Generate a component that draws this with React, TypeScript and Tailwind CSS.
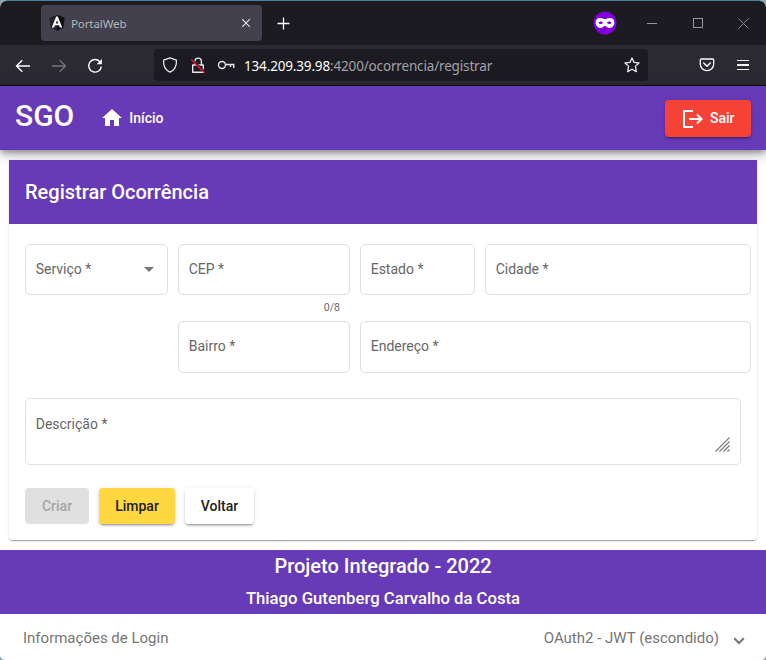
import type { ReactNode } from 'react';

function Icon({ box, w, h, className = '', children }: { box: string; w: number; h: number; className?: string; children: ReactNode }) {
  return (
    <svg viewBox={box} width={w} height={h} className={`block shrink-0 ${className}`} fill="none">
      {children}
    </svg>
  );
}

function TitleBar() {
  return (
    <div className="flex h-[45px] shrink-0 items-center rounded-t-[7px] border-t border-[#4d7f9e] bg-[#1c1b22] font-['Noto_Sans',sans-serif]">
      <div className="ml-[41px] flex h-9 w-[221px] items-center rounded-[4px] bg-[#42414d] pl-2 pr-[11px]">
        <Icon box="0 0 16 16" w={16} h={16}>
          <path d="M8 0 15.6 2.7 14.4 12.6 8 16 1.6 12.6.4 2.7Z" fill="#22232d" />
          <path d="M8 0 15.6 2.7 14.4 12.6 8 16Z" fill="#101118" />
          <path d="M7.2 1.6 2.8 12.5H5.1L6 10.2H10L10.9 12.5H13.2L8.8 1.6ZM8 5.2 9.3 8.5H6.7Z" fill="#fff" fillRule="evenodd" />
        </Icon>
        <span className="ml-[6px] mt-px flex-1 text-[11.5px] leading-4 tracking-[-0.1px] text-[#b5b4ba]">PortalWeb</span>
        <Icon box="0 0 10 10" w={10} h={10}>
          <path d="M1.2 1.2 8.8 8.8M8.8 1.2 1.2 8.8" stroke="#e5e5e8" strokeWidth="1.1" />
        </Icon>
      </div>
      <Icon box="0 0 13 13" w={13} h={13} className="ml-[15px]">
        <path d="M.5 6.5H12.5M6.5.5V12.5" stroke="#fbfbfe" strokeWidth="1.3" />
      </Icon>
      <Icon box="0 0 24 24" w={24} h={24} className="ml-[303px]">
        <circle cx="12" cy="12" r="11.5" fill="#8000d7" />
        <path
          fillRule="evenodd"
          fill="#fff"
          d="M7.2 6.9C9.4 6.9 10.6 8 12 8S14.6 6.9 16.8 6.9C19.8 6.9 21.4 8.8 21.4 11.6 21.4 14.8 19.2 16.9 16.6 16.9 14 16.9 13.4 14.9 12 14.9S10 16.9 7.4 16.9C4.8 16.9 2.6 14.8 2.6 11.6 2.6 8.8 4.2 6.9 7.2 6.9ZM5.5 11.9C6 10.9 6.9 10.6 7.8 10.6S9.6 11 10 11.9C9.4 12.6 8.7 12.9 7.8 12.9S6 12.6 5.5 11.9ZM14 11.9C14.4 11 15.3 10.6 16.2 10.6S18 10.9 18.5 11.9C18 12.6 17.1 12.9 16.2 12.9S14.6 12.6 14 11.9Z"
        />
      </Icon>
      <div className="ml-[30px] h-px w-[10px] bg-[#97969a]" />
      <div className="ml-[36px] size-[10px] border border-[#97969a]" />
      <Icon box="0 0 11 11" w={11} h={11} className="ml-[35px]">
        <path d="M.5.5 10.5 10.5M10.5.5.5 10.5" stroke="#97969a" strokeWidth=".9" />
      </Icon>
    </div>
  );
}

function Toolbar() {
  return (
    <div className="flex h-[41px] shrink-0 items-center border-b border-[#0c0c0d] bg-[#2b2a33] font-['Noto_Sans',sans-serif]">
      <Icon box="0 0 16 14" w={16} h={14} className="ml-[15px] mt-px">
        <path d="M15 7H1.5M7.3 1.3 1.5 7 7.3 12.7" stroke="#fbfbfe" strokeWidth="1.4" />
      </Icon>
      <Icon box="0 0 16 14" w={16} h={14} className="ml-5 mt-px">
        <path d="M1 7H14.5M8.7 1.3 14.5 7 8.7 12.7" stroke="#75747b" strokeWidth="1.3" />
      </Icon>
      <Icon box="0 0 16 16" w={16} h={16} className="ml-5 mt-px">
        <path d="M12.8 3.7A6.3 6.3 0 1 0 14.3 8.6" stroke="#fbfbfe" strokeWidth="1.4" />
        <path d="M14.9 1V6.3H9.6Z" fill="#fbfbfe" />
      </Icon>
      <div className="ml-[51px] flex h-8 w-[494px] items-center rounded-[4px] bg-[#1c1b22] pl-2">
        <Icon box="0 0 16 16" w={16} h={16}>
          <path d="M8 .8 14.4 3.1C14.8 7.4 13.4 12.6 8 15.2 2.6 12.6 1.2 7.4 1.6 3.1Z" stroke="#e6e6ea" strokeWidth="1.3" strokeLinejoin="round" />
        </Icon>
        <Icon box="0 0 16 17" w={16} h={17} className="ml-3">
          <path d="M2.7 8H13.3V15.3H2.7ZM5 8V4.5C5 0 11.4 0 11.4 4.5V8" stroke="#e6e6ea" strokeWidth="1.4" strokeLinejoin="round" />
          <path d="M2.2 2.2 15.2 15" stroke="#1c1b22" strokeWidth="1.4" />
          <path d="M1.2 2.6 14.9 16" stroke="#e4123c" strokeWidth="1.5" />
        </Icon>
        <Icon box="0 0 18 10" w={18} h={10} className="-mt-px ml-[11px]">
          <circle cx="5" cy="5" r="3.5" stroke="#e6e6ea" strokeWidth="1.4" />
          <path d="M8.5 4.5H16.7V8M13.5 4.5V7" stroke="#e6e6ea" strokeWidth="1.4" />
        </Icon>
        <span className="ml-[9px] mt-[2px] flex-1 whitespace-nowrap text-[13.5px] leading-5 tracking-[-0.16px] text-[#a3a2a8]">
          <span className="text-[#fbfbfe]">134.209.39.98</span>:4200/ocorrencia/registrar
        </span>
        <Icon box="0 0 16 16" w={16} h={16} className="mr-2">
          <path d="M8 1 10.1 5.4 15 6 11.4 9.4 12.4 14.7 8 12.2 3.6 14.7 4.6 9.4 1 6 5.9 5.4Z" stroke="#e6e6ea" strokeWidth="1.3" strokeLinejoin="round" />
        </Icon>
      </div>
      <Icon box="0 0 16 14" w={16} h={14} className="ml-[51px]">
        <path d="M2.2 1H13.8Q14.7 1 14.7 1.9V6A6.7 6.7 0 0 1 1.3 6V1.9Q1.3 1 2.2 1Z" stroke="#fbfbfe" strokeWidth="1.3" />
        <path d="M4.7 5 8 8.2 11.3 5" stroke="#fbfbfe" strokeWidth="1.4" strokeLinecap="round" />
      </Icon>
      <div className="ml-[22px] flex w-3 flex-col gap-[3.5px]">
        <div className="h-[1.3px] bg-[#fbfbfe]" />
        <div className="h-[1.3px] bg-[#fbfbfe]" />
        <div className="h-[1.3px] bg-[#fbfbfe]" />
      </div>
    </div>
  );
}

function Field({ label, className, children }: { label: string; className: string; children?: ReactNode }) {
  return (
    <div className={`flex items-center justify-between rounded-[5px] border border-[#e0e0e0] pb-[2px] pl-[9.7px] pr-[9px] text-sm leading-4 text-[#666] ${className}`}>
      <span>{label} *</span>
      {children}
    </div>
  );
}

const raised = 'shadow-[0_3px_1px_-2px_rgba(0,0,0,.2),0_2px_2px_0_rgba(0,0,0,.14),0_1px_5px_0_rgba(0,0,0,.12)]';

export default function App() {
  return (
    <div className="h-[660px] w-[766px] bg-[#8fa3ad]">
      <div className="flex h-full flex-col overflow-hidden rounded-b-[5px] rounded-t-[7px] bg-white font-[Roboto,sans-serif]">
        <TitleBar />
        <Toolbar />
        <header className="flex h-16 shrink-0 items-center bg-[#673ab7] px-[15px] text-white shadow-[0_3px_5px_-1px_rgba(0,0,0,.3),0_6px_10px_0_rgba(0,0,0,.18),0_1px_18px_0_rgba(0,0,0,.12)]">
          <span className="-mt-[5px] text-[30px] font-medium leading-8">SGO</span>
          <Icon box="0 0 24 24" w={24} h={24} className="-mt-px ml-[26px]">
            <path d="M10 20v-6h4v6h5v-8h3L12 3 2 12h3v8z" fill="#fff" />
          </Icon>
          <span className="ml-[5px] flex-1 text-sm font-medium">Início</span>
          <button className={`flex h-[37px] w-[86px] items-center rounded-[4px] bg-[#f44336] pl-4 text-sm font-medium ${raised}`}>
            <Icon box="0 0 24 20" w={24} h={20} className="mt-px">
              <path d="M12 2H3V18H12M8 10H20M16 5.5 20.5 10 16 14.5" stroke="#fff" strokeWidth="2" />
            </Icon>
            <span className="ml-[5px]">Sair</span>
          </button>
        </header>
        <main className="mx-[9px] mt-[10px] flex h-[380px] w-[748px] shrink-0 flex-col rounded-b-[4px] shadow-[0_2px_1px_-1px_rgba(0,0,0,.2),0_1px_1px_0_rgba(0,0,0,.14),0_1px_3px_0_rgba(0,0,0,.12)]">
          <h1 className="flex h-16 shrink-0 items-center bg-[#673ab7] pl-4 text-[20px] font-medium text-white">Registrar Ocorrência</h1>
          <form className="flex flex-1 flex-col rounded-b-[4px] bg-white pl-4 pt-5">
            <div className="flex gap-[10px]">
              <Field label="Serviço" className="h-[51px] w-[143px]">
                <div className="mr-1 mt-px h-0 w-0 border-x-5 border-t-5 border-x-transparent border-t-[#757575]" />
              </Field>
              <div className="w-[172px]">
                <Field label="CEP" className="h-[51px] w-full" />
                <div className="h-[26px] pr-[10px] pt-[5px] text-right text-[10.5px] leading-[15px] text-[#666]">0/8</div>
              </div>
              <Field label="Estado" className="h-[51px] w-[115px]" />
              <Field label="Cidade" className="h-[51px] w-[266px]" />
            </div>
            <div className="ml-[153px] flex gap-[10px]">
              <Field label="Bairro" className="h-[52px] w-[172px]" />
              <Field label="Endereço" className="h-[52px] w-[391px]" />
            </div>
            <div className="mt-[25px] flex h-[67px] w-[716px] justify-between rounded-[5px] border border-[#e0e0e0] pl-[9.7px] pr-[10px] text-sm leading-4 text-[#666]">
              <span className="mt-[17px]">Descrição *</span>
              <Icon box="0 0 15 15" w={15} h={15} className="mt-[38px]">
                <path d="M.5 14.5 14.5.5M4.5 14.5 14.5 4.5M8.5 14.5 14.5 8.5M12.5 14.5 14.5 12.5" stroke="#777" strokeWidth="1.1" />
              </Icon>
            </div>
            <div className="mt-[23px] flex gap-[10px] text-sm font-medium text-[#212121]">
              <button className="h-9 w-16 rounded-[4px] bg-[#e0e0e0] text-[#a6a6a6]">Criar</button>
              <button className={`h-9 w-[76px] rounded-[4px] bg-[#ffd740] ${raised}`}>Limpar</button>
              <button className={`h-9 w-[69px] rounded-[4px] bg-white ${raised}`}>Voltar</button>
            </div>
          </form>
        </main>
        <footer className="mt-[10px] flex h-16 shrink-0 flex-col items-center bg-[#673ab7] font-medium text-white">
          <div className="text-[20px] leading-8">Projeto Integrado - 2022</div>
          <div className="pt-px text-[16.7px] leading-[31px]">Thiago Gutenberg Carvalho da Costa</div>
        </footer>
        <div className="flex h-[46px] items-center pl-[23px] pr-[21px] pt-[2px] text-[15px] text-[#757575]">
          <span className="flex-1">Informações de Login</span>
          <span>OAuth2 - JWT (escondido)</span>
          <Icon box="0 0 12 8" w={12} h={8} className="ml-[14px] mt-[5px]">
            <path d="M1.2 1.2 6 6 10.8 1.2" stroke="#757575" strokeWidth="2" />
          </Icon>
        </div>
      </div>
    </div>
  );
}
